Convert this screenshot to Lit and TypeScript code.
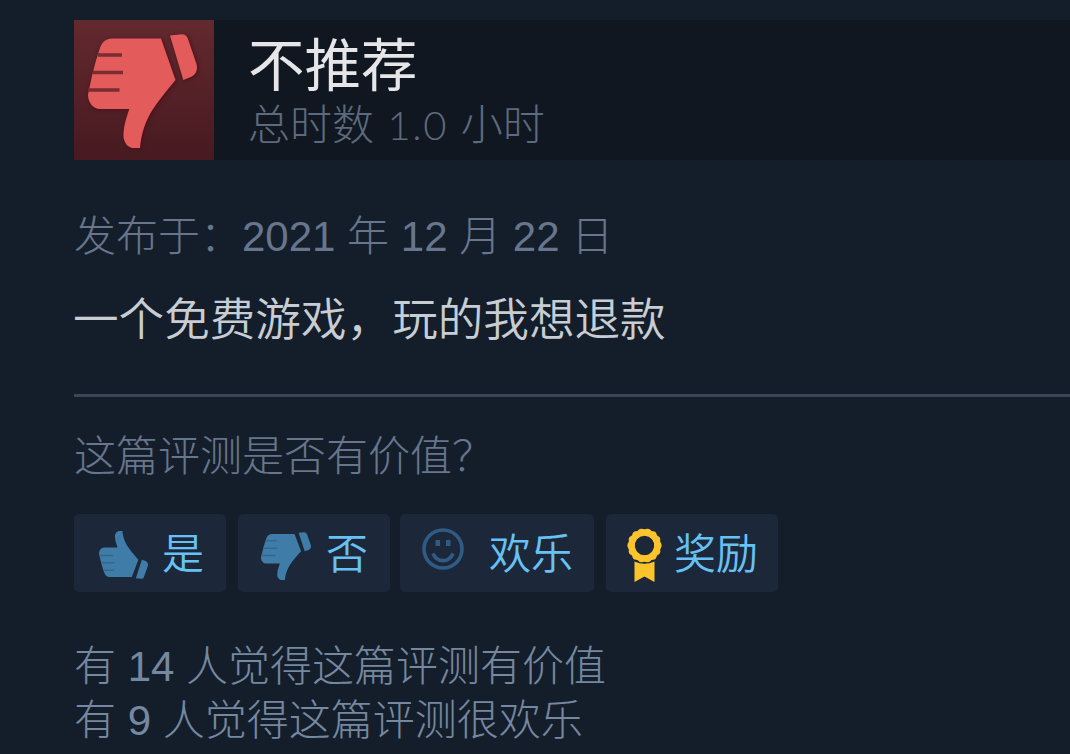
import { LitElement, html, css, svg } from "lit";
import { customElement, property } from "lit/decorators.js";

@customElement("thumb-icon")
class ThumbIcon extends LitElement {
  @property({ type: Boolean, reflect: true }) up = false;

  static styles = css`
    :host {
      display: block;
    }
    :host([up]) {
      transform: scaleY(-1);
    }
    svg {
      display: block;
      width: 100%;
      height: 100%;
      overflow: visible;
    }
    .shape {
      fill: currentColor;
    }
    .fingers {
      fill: none;
      stroke: var(--finger-color, #7a2c30);
      stroke-width: 3.6;
    }
  `;

  render() {
    return html`
      <svg viewBox="14 13 109 114" preserveAspectRatio="none">
        <path
          class="shape"
          d="M38 17.5H87L101.500 59C91 72 83 81 76 93C70 104 67 115 66 127H58C51 125 49 118 49.500 112C50 103 53 95 55.300 88H26C19 88 14 81 14 74C17 58 21 41 26 27C28 21 32 17.500 38 17.500Z"
        />
        <path
          class="shape"
          d="M96 14.500L108 13.300C111 13.300 113 15 114 18L122.500 43C124 49 122 53 118 55.500L109.300 59Z"
        />
        <path class="fingers" d="M24 34H48M19 51.500H49M14 69H45.500" />
      </svg>
    `;
  }
}

@customElement("vote-button")
class VoteButton extends LitElement {
  static styles = css`
    :host {
      display: flex;
      align-items: center;
      box-sizing: border-box;
      height: 78px;
      padding-top: 3px;
      border-radius: 5px;
      background: #1c2839;
      color: #67c1f5;
      font-size: 42px;
      font-weight: 350;
      line-height: 60px;
      white-space: nowrap;
    }
  `;

  render() {
    return html`<slot name="icon"></slot><slot></slot>`;
  }
}

// scalloped edge of the rosette
const petals = Array.from({ length: 14 }, (_, i) => {
  const a = (i / 14) * Math.PI * 2;
  return svg`<circle cx=${17.5 + 13.4 * Math.cos(a)} cy=${17.5 + 13.4 * Math.sin(a)} r="3.700" />`;
});

@customElement("app-root")
class AppRoot extends LitElement {
  static styles = css`
    :host {
      display: block;
      box-sizing: border-box;
      height: 754px;
      padding: 20px 0 0 74px;
      overflow: hidden;
      background: #141e2b;
      color: #67768c;
      font-family: "Liberation Sans", "Noto Sans CJK SC", sans-serif;
      font-size: 42px;
      font-weight: 300;
      white-space: nowrap;
    }
    .header {
      display: flex;
      height: 140px;
      background: #101721;
    }
    .badge {
      box-sizing: border-box;
      width: 140px;
      height: 140px;
      padding: 14px 17px 12px 14px;
      background: linear-gradient(#63292f, #461a20);
      color: #e35c5b;
    }
    .badge thumb-icon {
      width: 109px;
      height: 114px;
      filter: drop-shadow(1px 1px 2px #4b0f18);
    }
    .verdict {
      padding: 13px 0 0 34px;
    }
    .title {
      color: #e6e6e8;
      font-size: 56.5px;
      font-weight: 400;
      line-height: 68px;
    }
    .hours {
      color: #5d6a7e;
      font-family: Lato, "Noto Sans CJK SC", sans-serif;
      line-height: 47px;
    }
    .amount {
      margin: 0 1px 0 2px;
      font-size: 40px;
      letter-spacing: 1.7px;
    }
    .date {
      margin-top: 51px;
      line-height: 51px;
    }
    .review {
      margin-top: 31px;
      margin-left: -1px;
      color: #c8cdd3;
      font-size: 45.6px;
      font-weight: 350;
      line-height: 56px;
    }
    .rule {
      height: 3px;
      margin-top: 45px;
      background: #3a4656;
    }
    .question {
      margin-top: 35px;
      line-height: 50px;
    }
    .buttons {
      display: flex;
      margin-top: 32px;
    }
    .yes,
    .no {
      width: 152px;
      margin-right: 12px;
      padding-left: 25px;
    }
    .no {
      margin-right: 10px;
      padding-left: 23px;
    }
    .funny {
      width: 194px;
      margin-right: 12px;
      padding-left: 22px;
    }
    .award {
      width: 172px;
      padding-left: 21px;
    }
    .thumb {
      width: 50px;
      height: 48px;
      color: #3f7ca8;
      --finger-color: #33678f;
    }
    .yes .thumb {
      width: 49px;
      margin-right: 14px;
    }
    .no .thumb {
      margin: 3px 15px 0 0;
    }
    .smile {
      width: 42px;
      height: 42px;
      margin: 0 25px 11px 0;
    }
    .ribbon {
      width: 35px;
      height: 54px;
      margin: 0 12px 0 0;
    }
    .stats {
      margin-top: 48px;
      color: #7588a0;
      line-height: 54px;
    }
  `;

  render() {
    return html`
      <div class="header">
        <div class="badge"><thumb-icon></thumb-icon></div>
        <div class="verdict">
          <div class="title">不推荐</div>
          <div class="hours">总时数 <span class="amount">1.0</span> 小时</div>
        </div>
      </div>

      <div class="date">发布于：2021 年 12 月 22 日</div>
      <div class="review">一个免费游戏，玩的我想退款</div>
      <div class="rule"></div>
      <div class="question">这篇评测是否有价值？</div>

      <div class="buttons">
        <vote-button class="yes">
          <thumb-icon class="thumb" slot="icon" up></thumb-icon>是
        </vote-button>
        <vote-button class="no">
          <thumb-icon class="thumb" slot="icon"></thumb-icon>否
        </vote-button>
        <vote-button class="funny">
          <svg class="smile" slot="icon" viewBox="0 0 42 42">
            <g fill="none" stroke="#2f5b85" stroke-width="3.600">
              <circle cx="21" cy="21" r="19" />
              <path d="M11 25.500C15 35 27 35 31 25.500" />
            </g>
            <path fill="#2f5b85" d="M13.500 12h4.500v6h-4.500zM24 12h4.500v6H24z" />
          </svg>欢乐
        </vote-button>
        <vote-button class="award">
          <svg class="ribbon" slot="icon" viewBox="0 0 35 54" fill="#fcc42c">
            <circle cx="17.500" cy="17.500" r="13" fill="none" stroke="#fcc42c" stroke-width="6.500" />
            ${petals}
            <path d="M7.500 33.500Q17.500 38 27.500 33.500V54L17.500 48.500L7.500 54Z" />
          </svg>奖励
        </vote-button>
      </div>

      <div class="stats">
        <div>有 14 人觉得这篇评测有价值</div>
        <div>有 9 人觉得这篇评测很欢乐</div>
      </div>
    `;
  }
}
